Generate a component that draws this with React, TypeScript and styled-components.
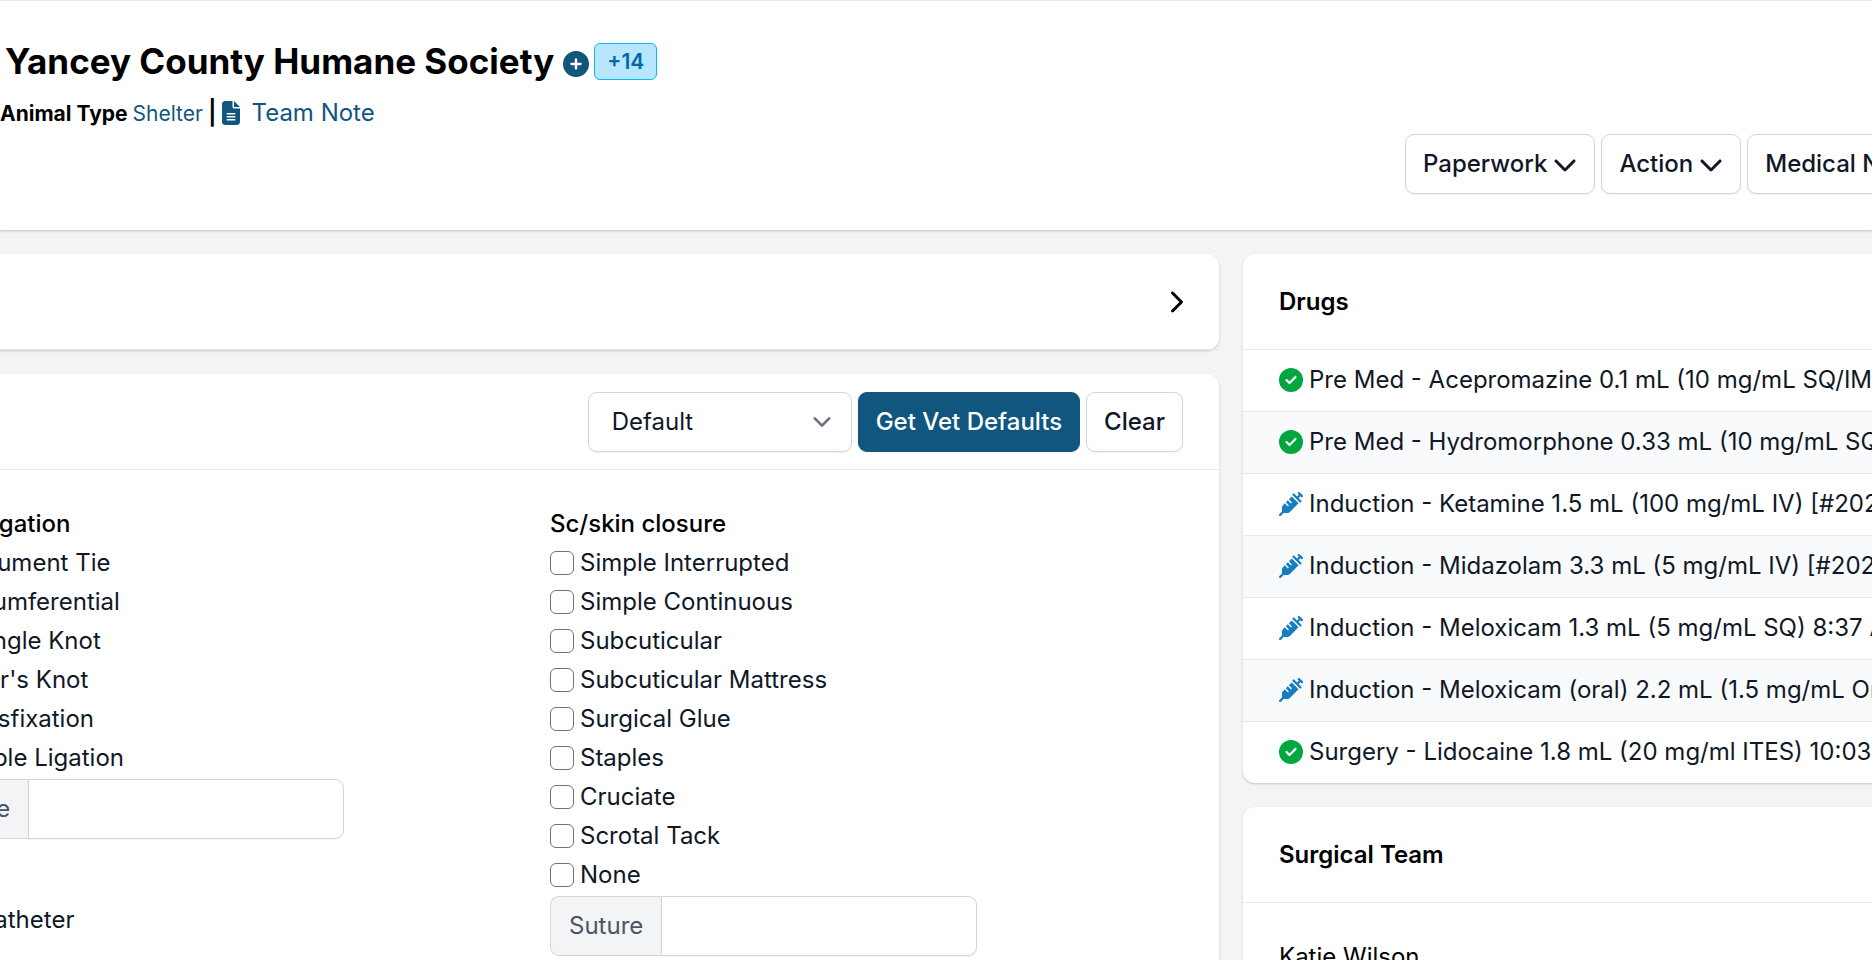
import React, { useId } from "react";
import styled, { createGlobalStyle, css } from "styled-components";
import {
  FaChevronDown,
  FaChevronRight,
  FaCircleCheck,
  FaCirclePlus,
  FaFileLines,
  FaSyringe,
} from "react-icons/fa6";

const GlobalStyle = createGlobalStyle`
  *, *::before, *::after { box-sizing: border-box; }
  html { scrollbar-width: none; }
  body {
    margin: 0;
    background: #f3f4f6;
    color: #000;
    font-family: Inter, "Liberation Sans", sans-serif;
    font-size: 24px;
    line-height: 36px;
  }
  h1, h2, h3, p, ul { margin: 0; padding: 0; }
  svg { display: block; flex-shrink: 0; }
  button, input, select { font: inherit; color: inherit; }
`;

const Page = styled.div`
  min-height: 100vh;
  overflow-x: clip;
`;

const Header = styled.header`
  display: grid;
  grid-template-columns: 3fr 1fr;
  min-height: 230px;
  padding: 36px 0;
  border-top: 1px solid #e5e7eb;
  background: #fff;
  box-shadow: 0 1px 3px rgba(0, 0, 0, 0.12), 0 1px 2px rgba(0, 0, 0, 0.1);
`;

const HeaderInfo = styled.div`
  display: flex;
  flex-direction: column;
  gap: 10px;
`;

const TitleRow = styled.div`
  display: flex;
  align-items: center;
  gap: 5px;
  height: 48px;
  padding-left: 5px;
`;

const Title = styled.h1`
  font-size: 35px;
  line-height: 48px;
  font-weight: 700;
`;

const RoundButton = styled.button`
  margin: 6px 0 0 4px;
  padding: 0;
  border: 0;
  background: none;
  color: #11567f;
  font-size: 26px;
`;

const CountBadge = styled.span`
  padding: 0 12px;
  border: 1px solid #00bcff;
  border-radius: 6px;
  background: #b8e6fe;
  color: #0069a8;
  font-size: 21px;
  line-height: 35px;
  font-weight: 600;
`;

const MetaRow = styled.div`
  display: flex;
  align-items: baseline;
  font-size: 21px;
`;

const MetaLabel = styled.span`
  font-weight: 700;
`;

const TextLink = styled.a<{ $large?: boolean }>`
  margin-left: ${(p) => (p.$large ? 0 : 5)}px;
  color: #11567f;
  font-size: ${(p) => (p.$large ? 24 : 21)}px;
  text-decoration: none;

  svg {
    display: inline-block;
    margin-right: 9px;
    vertical-align: -4px;
  }
`;

const Divider = styled.span`
  margin: 0 2px 0 5px;
  font-size: 24px;
  font-weight: 600;
`;

const ButtonBar = styled.div`
  display: flex;
  align-self: end;
  gap: 6px;
  min-width: 0;
  padding-left: 1px;
`;

const Button = styled.button<{ $primary?: boolean }>`
  display: inline-flex;
  align-items: center;
  flex-shrink: 0;
  gap: 6px;
  height: 60px;
  padding: 0 17px;
  border: 1px solid #d1d5dc;
  border-radius: 9px;
  background: #fff;
  color: #101828;
  font-weight: 500;
  white-space: nowrap;
  box-shadow: 0 1px 2px rgba(0, 0, 0, 0.05);
  ${(p) =>
    p.$primary &&
    css`
      border-color: #11567f;
      background: #11567f;
      color: #fff;
    `}
`;

/* The record is wider than the window and is scrolled a little to the right. */
const Main = styled.main`
  display: grid;
  grid-template-columns: minmax(0, 2fr) minmax(0, 1fr);
  gap: 24px;
  width: calc(100% + 159px);
  margin-left: -119px;
  padding: 24px 0;
`;

const Column = styled.div`
  display: flex;
  flex-direction: column;
  gap: 24px;
`;

const Card = styled.section`
  border-radius: 12px;
  background: #fff;
  box-shadow: 0 1px 3px rgba(0, 0, 0, 0.1), 0 1px 2px rgba(0, 0, 0, 0.1);
`;

const CardHeader = styled.div<{ $end?: boolean }>`
  display: flex;
  align-items: center;
  justify-content: ${(p) => (p.$end ? "flex-end" : "flex-start")};
  gap: 6px;
  min-height: 96px;
  padding: 18px 36px 17px;
  border-bottom: 1px solid #e5e7eb;
`;

const CardTitle = styled.h2`
  font-size: 24px;
  line-height: 36px;
  font-weight: 600;
`;

const CardBody = styled.div`
  padding: 36px;
`;

const FieldGrid = styled(CardBody)`
  display: grid;
  grid-template-columns: 1fr 1fr;
`;

const IconButton = styled.button`
  padding: 0;
  border: 0;
  background: none;

  svg {
    width: 15px;
    height: 24px;
  }
`;

const SelectBox = styled.div`
  position: relative;
  width: 264px;
  color: #6a7282;

  svg {
    position: absolute;
    top: 12px;
    right: 12px;
    pointer-events: none;
  }
`;

const Select = styled.select`
  width: 100%;
  height: 60px;
  padding: 0 60px 0 23px;
  border: 1px solid #d1d5dc;
  border-radius: 9px;
  appearance: none;
  background: #fff;
  color: #101828;
  box-shadow: 0 1px 2px rgba(0, 0, 0, 0.05);
`;

const FieldStack = styled.div`
  display: flex;
  flex-direction: column;
  align-items: flex-start;
  gap: 63px;
`;

const Group = styled.div`
  display: flex;
  flex-direction: column;
  align-items: flex-start;
  gap: 3px;
`;

const GroupTitle = styled.h3`
  font-size: 24px;
  line-height: 36px;
  font-weight: 500;
`;

const CheckLabel = styled.label`
  display: flex;
  align-items: center;
  gap: 6px;
  color: #101828;
`;

const Checkbox = styled.input.attrs({ type: "checkbox" })`
  width: 24px;
  height: 24px;
  margin: 0;
  border: 1px solid #6a7282;
  border-radius: 6px;
  appearance: none;
  background: #fff;

  &:checked {
    background: #11567f;
  }
`;

const InputGroup = styled.div`
  display: flex;
  width: 427px;
  height: 60px;
`;

const Addon = styled.label`
  display: flex;
  align-items: center;
  padding: 0 18px;
  border: 1px solid #d1d5dc;
  border-right: 0;
  border-radius: 9px 0 0 9px;
  background: #f3f4f6;
  color: #4a5565;
`;

const TextInput = styled.input`
  flex: 1;
  min-width: 0;
  padding: 0 18px;
  border: 1px solid #d1d5dc;
  border-radius: 0 9px 9px 0;
  background: #fff;
  box-shadow: 0 1px 2px rgba(0, 0, 0, 0.05);
`;

const DrugList = styled.ul`
  list-style: none;
  overflow: hidden;
  border-radius: 0 0 12px 12px;
`;

const DrugRow = styled.li<{ $given: boolean }>`
  display: flex;
  align-items: center;
  gap: 6px;
  padding: 12px 36px 13px;
  color: #101828;
  white-space: nowrap;

  svg {
    color: ${(p) => (p.$given ? "#00a63e" : "#177dc2")};
  }
  &:nth-child(even) {
    background: #f9fafb;
  }
  & + & {
    border-top: 1px solid #e5e7eb;
  }
`;

const ligation = [
  "Instrument Tie",
  "Circumferential",
  "Strangle Knot",
  "Miller's Knot",
  "Transfixation",
  "Double Ligation",
];

const closure = [
  "Simple Interrupted",
  "Simple Continuous",
  "Subcuticular",
  "Subcuticular Mattress",
  "Surgical Glue",
  "Staples",
  "Cruciate",
  "Scrotal Tack",
  "None",
];

const drugs = [
  { given: true, text: "Pre Med - Acepromazine 0.1 mL (10 mg/mL SQ/IM)" },
  { given: true, text: "Pre Med - Hydromorphone 0.33 mL (10 mg/mL SQ/IM)" },
  { given: false, text: "Induction - Ketamine 1.5 mL (100 mg/mL IV) [#2025]" },
  { given: false, text: "Induction - Midazolam 3.3 mL (5 mg/mL IV) [#2025]" },
  { given: false, text: "Induction - Meloxicam 1.3 mL (5 mg/mL SQ) 8:37 AM" },
  { given: false, text: "Induction - Meloxicam (oral) 2.2 mL (1.5 mg/mL Oral)" },
  { given: true, text: "Surgery - Lidocaine 1.8 mL (20 mg/ml ITES) 10:03 AM" },
];

function CheckItem({ text }: { text: string }) {
  const id = useId();
  return (
    <CheckLabel htmlFor={id}>
      <Checkbox id={id} />
      {text}
    </CheckLabel>
  );
}

function CheckGroup({ title, items }: { title: string; items: string[] }) {
  const id = useId();
  return (
    <Group role="group" aria-label={title}>
      <GroupTitle>{title}</GroupTitle>
      {items.map((item) => (
        <CheckItem key={item} text={item} />
      ))}
      <InputGroup>
        <Addon htmlFor={id}>Suture</Addon>
        <TextInput id={id} type="text" />
      </InputGroup>
    </Group>
  );
}

export default function App() {
  return (
    <Page>
      <GlobalStyle />
      <Header>
        <HeaderInfo>
          <TitleRow>
            <Title>Yancey County Humane Society</Title>
            <RoundButton aria-label="Add">
              <FaCirclePlus />
            </RoundButton>
            <CountBadge>+14</CountBadge>
          </TitleRow>
          <MetaRow>
            <MetaLabel>Animal Type</MetaLabel>
            <TextLink href="#shelter">Shelter</TextLink>
            <Divider>|</Divider>
            <TextLink href="#team-note" $large>
              <FaFileLines />
              Team Note
            </TextLink>
          </MetaRow>
        </HeaderInfo>
        <ButtonBar>
          <Button>
            Paperwork <FaChevronDown />
          </Button>
          <Button>
            Action <FaChevronDown />
          </Button>
          <Button>Medical Notes</Button>
        </ButtonBar>
      </Header>

      <Main>
        <Column>
          <Card>
            <CardHeader $end>
              <IconButton aria-label="Expand">
                <FaChevronRight />
              </IconButton>
            </CardHeader>
          </Card>
          <Card>
            <CardHeader $end>
              <SelectBox>
                <Select aria-label="Template" defaultValue="Default">
                  <option>Default</option>
                </Select>
                <svg width="36" height="36" viewBox="0 0 20 20" fill="none" stroke="currentColor" strokeWidth="1.5" strokeLinecap="round" strokeLinejoin="round">
                  <path d="M6 8l4 4 4-4" />
                </svg>
              </SelectBox>
              <Button $primary>Get Vet Defaults</Button>
              <Button>Clear</Button>
            </CardHeader>
            <FieldGrid>
              <FieldStack>
                <CheckGroup title="Cord Ligation" items={ligation} />
                <CheckItem text="IV Catheter" />
              </FieldStack>
              <CheckGroup title="Sc/skin closure" items={closure} />
            </FieldGrid>
          </Card>
        </Column>

        <Column>
          <Card>
            <CardHeader>
              <CardTitle>Drugs</CardTitle>
            </CardHeader>
            <DrugList>
              {drugs.map((drug) => (
                <DrugRow key={drug.text} $given={drug.given}>
                  {drug.given ? <FaCircleCheck /> : <FaSyringe />}
                  {drug.text}
                </DrugRow>
              ))}
            </DrugList>
          </Card>
          <Card>
            <CardHeader>
              <CardTitle>Surgical Team</CardTitle>
            </CardHeader>
            <CardBody>
              <p>Katie Wilson</p>
            </CardBody>
          </Card>
        </Column>
      </Main>
    </Page>
  );
}
